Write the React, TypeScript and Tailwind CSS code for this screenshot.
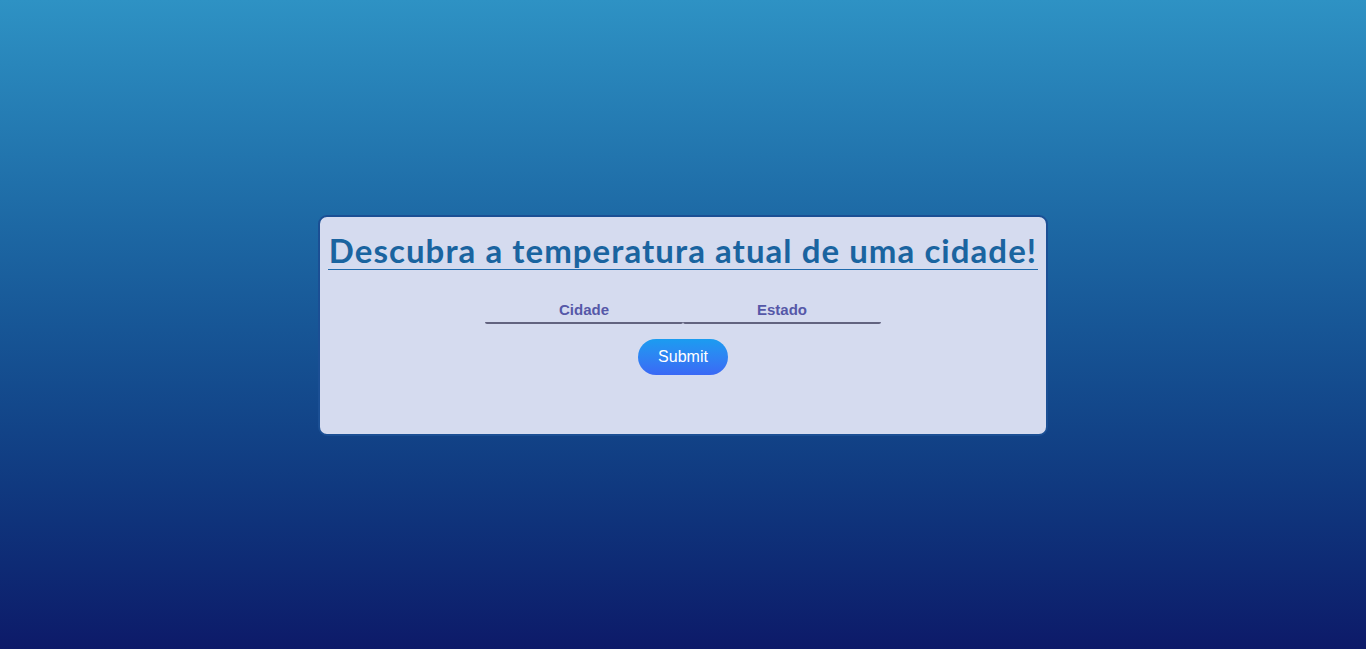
export default function App() {
  return (
    <div className="min-h-[649px] w-full bg-gradient-to-b from-[#2e92c4] to-[#0d1a69] flex items-center justify-center font-['Liberation_Sans',Arial,sans-serif]">
      <div className="w-[730px] h-[221px] mt-[2px] bg-[#d5dbef] border-2 border-[#1b4f94] rounded-[9px] flex flex-col items-center pt-[14px]">
        <h1 className="inline-block border-b border-[#1f6aac] text-[#1a64a0] text-[33px] leading-[38px] font-bold tracking-[1.05px] px-[1px] font-['Lato','Noto_Sans',sans-serif]">
          Descubra a temperatura atual de uma cidade!
        </h1>
        <form className="flex flex-col items-center mt-[32px]" onSubmit={(e) => e.preventDefault()}>
          <div className="flex">
            <input
              type="text"
              placeholder="Cidade"
              className="w-[198px] h-[22px] pb-[4px] bg-transparent border-b-2 border-[#62637f] rounded-[2px] text-center text-[15px] font-bold text-[#4f52a3] placeholder:text-[#5558a8] outline-none"
            />
            <input
              type="text"
              placeholder="Estado"
              className="w-[198px] h-[22px] pb-[4px] bg-transparent border-b-2 border-[#62637f] rounded-[2px] text-center text-[15px] font-bold text-[#4f52a3] placeholder:text-[#5558a8] outline-none"
            />
          </div>
          <button
            type="submit"
            className="mt-[15px] w-[90px] h-[36px] rounded-full bg-gradient-to-b from-[#1a9cf0] to-[#3a68f5] text-white text-[16px]"
          >
            Submit
          </button>
        </form>
      </div>
    </div>
  );
}
